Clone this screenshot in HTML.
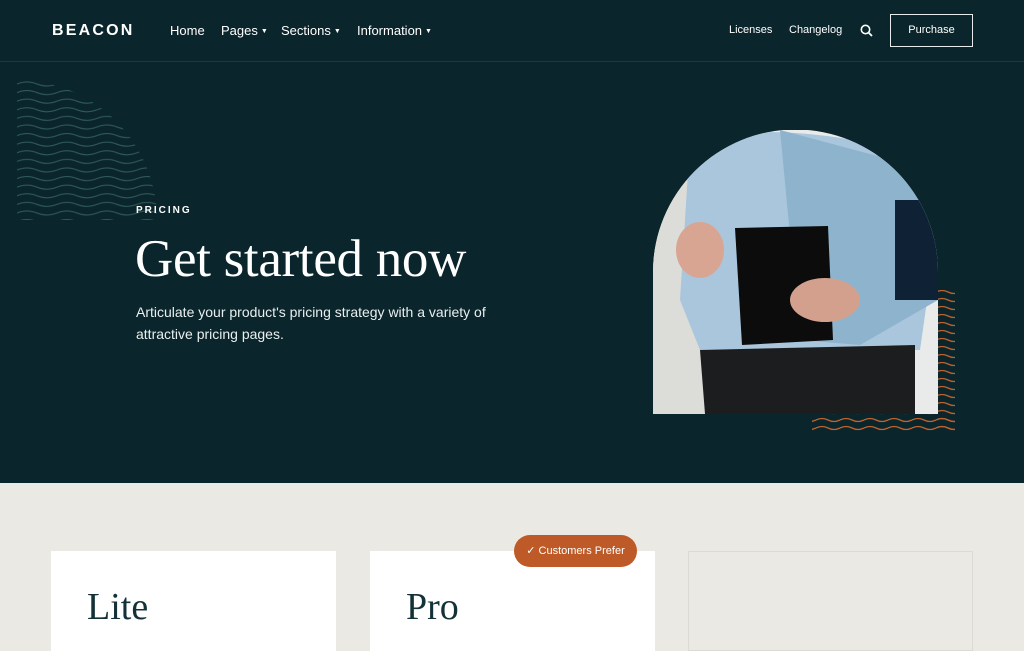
<!DOCTYPE html>
<html><head><meta charset="utf-8"><style>
*{margin:0;padding:0;box-sizing:border-box}
body{width:1024px;height:640px;overflow:hidden;background:#ebe9e4;font-family:"Liberation Sans",sans-serif}
.hero{position:absolute;left:0;top:0;width:1024px;height:483px;background:#0a252b}
.nav{position:absolute;top:0;left:0;width:1024px;height:62px;border-bottom:1px solid #1c3a40}
.logo{position:absolute;left:52px;top:22px;color:#fff;font-weight:bold;font-size:16px;letter-spacing:2.2px}
.nl{position:absolute;top:23px;color:#fff;font-size:13px}
.nl i{font-style:normal;font-size:7px;vertical-align:2px;margin-left:3px}
.nr{position:absolute;top:24px;color:#fff;font-size:11px}
.btn{position:absolute;left:890px;top:14px;width:83px;height:33px;border:1.5px solid #e6ecec;color:#fff;font-size:11px;text-align:center;line-height:31px}
.eyebrow{position:absolute;left:136px;top:205px;color:#fff;font-size:10px;letter-spacing:2px;font-weight:bold}
h1{position:absolute;left:135px;top:229px;color:#fff;font-family:"Liberation Serif",serif;font-weight:normal;font-size:53px;letter-spacing:-0.3px}
.sub{position:absolute;left:136px;top:301px;color:#e9efef;font-size:14px;line-height:22px;width:380px}
.card{position:absolute;top:551px;width:285px;height:100px;background:#fff}
.card h2{position:absolute;left:36px;top:34px;font-family:"Liberation Serif",serif;font-weight:normal;font-size:38px;color:#133238}
.badge{position:absolute;left:514px;top:535px;width:123px;height:32px;border-radius:16px;background:#bd5a27;color:#fff;font-size:11px;text-align:center;line-height:32px}
</style></head><body>
<div class="hero">
<svg width="1024" height="483" style="position:absolute;left:0;top:0">
<defs>
<pattern id="wv" x="17" y="80" width="40" height="8.6" patternUnits="userSpaceOnUse">
<path d="M0 4 Q10 0 20 4 T40 4" fill="none" stroke="#2f5a5c" stroke-width="1.1"/></pattern>
<pattern id="wo" x="0" y="0" width="24" height="8" patternUnits="userSpaceOnUse">
<path d="M0 4 Q6 1 12 4 T24 4" fill="none" stroke="#c0622b" stroke-width="1.3"/></pattern>
<clipPath id="qc"><path d="M17 80 A140 140 0 0 1 157 220 L17 220 Z"/></clipPath>
<clipPath id="arch"><path d="M653 414 L653 272 A142.5 142.5 0 0 1 938 272 L938 414 Z"/></clipPath>
</defs>
<rect x="17" y="80" width="140" height="140" fill="url(#wv)" clip-path="url(#qc)"/>
<rect x="937" y="290" width="18" height="140" fill="url(#wo)"/>
<rect x="812" y="414" width="143" height="18" fill="url(#wo)"/>
<g clip-path="url(#arch)">
<rect x="653" y="130" width="285" height="285" fill="#e9ebea"/>
<rect x="653" y="130" width="60" height="285" fill="#dcdcd8"/>
<path d="M690 140 Q780 120 900 150 L930 280 L920 350 L700 350 L680 300 Z" fill="#a9c6dc"/>
<path d="M780 130 L930 170 L938 300 L860 345 L800 340 Z" fill="#8eb3cd"/>
<rect x="895" y="200" width="43" height="100" fill="#0f2235"/>
<path d="M700 350 L915 345 L915 414 L705 414 Z" fill="#1c1d1f"/>
<path d="M735 228 L828 226 L833 340 L742 345 Z" fill="#0c0c0c"/>
<ellipse cx="700" cy="250" rx="24" ry="28" fill="#d8a593"/>
<ellipse cx="825" cy="300" rx="35" ry="22" fill="#d3a08e"/>
</g>
</svg>
<div class="nav">
<div class="logo">BEACON</div>
<div class="nl" style="left:170px">Home</div>
<div class="nl" style="left:221px">Pages<i>▼</i></div>
<div class="nl" style="left:281px">Sections<i>▼</i></div>
<div class="nl" style="left:357px">Information<i>▼</i></div>
<div class="nr" style="left:729px">Licenses</div>
<div class="nr" style="left:789px">Changelog</div>
<svg style="position:absolute;left:860px;top:24px" width="13" height="13" viewBox="0 0 13 13"><circle cx="5.5" cy="5.5" r="4.2" fill="none" stroke="#fff" stroke-width="1.6"/><path d="M8.6 8.6 L12 12" stroke="#fff" stroke-width="1.8"/></svg>
<div class="btn">Purchase</div>
</div>
<div class="eyebrow">PRICING</div>
<h1>Get started now</h1>
<div class="sub">Articulate your product's pricing strategy with a variety of attractive pricing pages.</div>
</div>
<div class="card" style="left:51px"><h2>Lite</h2></div>
<div class="card" style="left:370px"><h2>Pro</h2></div>
<div class="card" style="left:688px;background:#ebe9e4;border:1px solid #dcdad4"></div>
<div class="badge">✓ Customers Prefer</div>
</body></html>
